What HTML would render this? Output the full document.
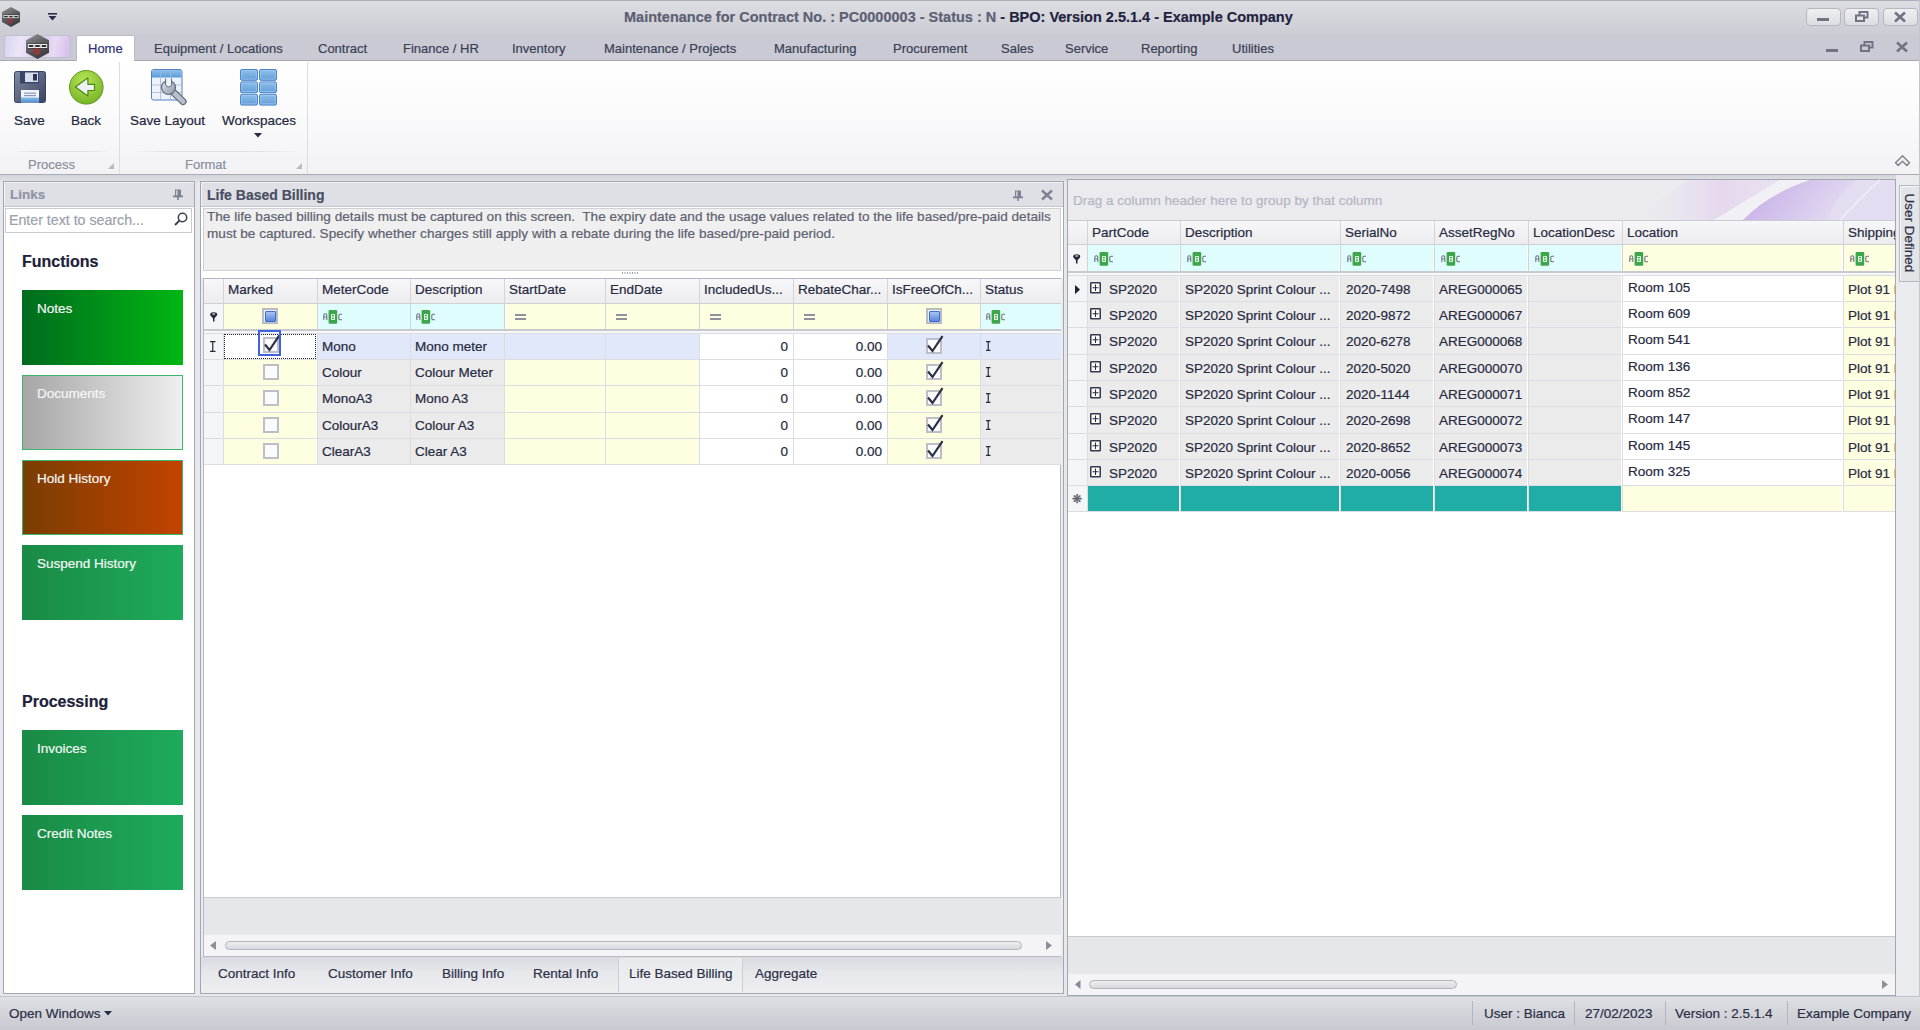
<!DOCTYPE html><html><head><meta charset="utf-8"><style>
*{box-sizing:border-box;margin:0;padding:0}
html,body{width:1920px;height:1030px;overflow:hidden;background:#e7e8eb;font-family:"Liberation Sans",sans-serif;font-size:13px;color:#20243a}
.a{position:absolute}
.t{position:absolute;white-space:nowrap;line-height:16px;-webkit-text-stroke:0.2px currentColor}
svg{position:absolute;overflow:visible}
</style></head><body>
<div class="a" style="left:0px;top:0px;width:1920px;height:35px;background:linear-gradient(#dcdde2,#d3d4da 55%,#cbccd4);border-top:1px solid #aeb1bb"></div>
<svg style="left:2px;top:7px" width="18" height="20" viewBox="0 0 18 20"><defs><linearGradient id="hg2_7" x1="0.2" y1="0" x2="0.7" y2="1"><stop offset="0" stop-color="#8e8e92"/><stop offset="0.5" stop-color="#5a5a5e"/><stop offset="1" stop-color="#3a3a3d"/></linearGradient></defs><polygon points="9.0,0 18,5.0 18,15.0 9.0,20 0,15.0 0,5.0" fill="url(#hg2_7)"/><rect x="1.08" y="7.6" width="15.84" height="4.0" fill="#2e2e30"/><rect x="1.8" y="8.4" width="4.32" height="2.4" fill="none" stroke="#f0f0f0" stroke-width="0.8099999999999999"/><rect x="6.84" y="8.4" width="4.32" height="2.4" fill="none" stroke="#f0f0f0" stroke-width="0.8099999999999999"/><rect x="11.88" y="8.4" width="4.32" height="2.4" fill="none" stroke="#f0f0f0" stroke-width="0.8099999999999999"/><circle cx="8.280000000000001" cy="14.0" r="1.8" fill="none" stroke="#c42828" stroke-width="1.08"/></svg>
<svg style="left:48px;top:13px" width="10" height="8" viewBox="0 0 10 8"><rect x="0" y="0" width="9" height="1.6" fill="#2a2c4a"/><polygon points="0.5,3 8.5,3 4.5,7.5" fill="#2a2c4a"/></svg>
<div class="t" style="left:624px;top:9px;font-size:14.5px;font-weight:bold;color:#5b6073;letter-spacing:0px">Maintenance for Contract No. : PC0000003 - Status : N <span style="color:#1f2340">- BPO: Version 2.5.1.4 - Example Company</span></div>
<div class="a" style="left:1806px;top:8px;width:35px;height:18px;border:1px solid #b4b6c0;border-radius:4px;background:linear-gradient(#f0f0f3,#dcdde2)"></div>
<div class="a" style="left:1844px;top:8px;width:35px;height:18px;border:1px solid #b4b6c0;border-radius:4px;background:linear-gradient(#f0f0f3,#dcdde2)"></div>
<div class="a" style="left:1883px;top:8px;width:35px;height:18px;border:1px solid #b4b6c0;border-radius:4px;background:linear-gradient(#f0f0f3,#dcdde2)"></div>
<div class="a" style="left:1817px;top:18px;width:12px;height:3px;background:#6f7384"></div>
<svg style="left:1855px;top:11px" width="14" height="11" viewBox="0 0 14 11"><rect x="4.5" y="1" width="8" height="5.5" fill="none" stroke="#6f7384" stroke-width="2"/><rect x="1" y="4.5" width="8" height="5.5" fill="#e4e5e9" stroke="#6f7384" stroke-width="2"/></svg>
<svg style="left:1894px;top:12px" width="12" height="10" viewBox="0 0 12 10"><path d="M1 0.5 L11 9.5 M11 0.5 L1 9.5" stroke="#6f7384" stroke-width="2.6"/></svg>
<div class="a" style="left:0px;top:35px;width:1920px;height:26px;background:#c9cad3;border-bottom:1px solid #a6a9b4"></div>
<div class="a" style="left:4px;top:35px;width:67px;height:23px;border:1px solid #bfc0cc;border-radius:2px;background:linear-gradient(100deg,#d9d3f2 0%,#ece6f8 25%,#dcc6ec 55%,#e7daf3 75%,#d4bde9 100%)"></div>
<svg style="left:26px;top:34px" width="23" height="25" viewBox="0 0 23 25"><defs><linearGradient id="hg26_34" x1="0.2" y1="0" x2="0.7" y2="1"><stop offset="0" stop-color="#8e8e92"/><stop offset="0.5" stop-color="#5a5a5e"/><stop offset="1" stop-color="#3a3a3d"/></linearGradient></defs><polygon points="11.5,0 23,6.25 23,18.75 11.5,25 0,18.75 0,6.25" fill="url(#hg26_34)"/><rect x="1.38" y="9.5" width="20.24" height="5.0" fill="#2e2e30"/><rect x="2.3000000000000003" y="10.5" width="5.52" height="3.0" fill="none" stroke="#f0f0f0" stroke-width="1.035"/><rect x="8.74" y="10.5" width="5.52" height="3.0" fill="none" stroke="#f0f0f0" stroke-width="1.035"/><rect x="15.180000000000001" y="10.5" width="5.52" height="3.0" fill="none" stroke="#f0f0f0" stroke-width="1.035"/><circle cx="10.58" cy="17.5" r="2.3000000000000003" fill="none" stroke="#c42828" stroke-width="1.38"/></svg>
<div class="a" style="left:76px;top:35px;width:59px;height:27px;background:#ffffff;border:1px solid #b9bbc5;border-bottom:none;border-radius:2px 2px 0 0"></div>
<div class="t" style="left:88px;top:41px;font-size:13px;color:#2b2f7a">Home</div>
<div class="t" style="left:154px;top:41px;font-size:13px;color:#3a3f55">Equipment / Locations</div>
<div class="t" style="left:318px;top:41px;font-size:13px;color:#3a3f55">Contract</div>
<div class="t" style="left:403px;top:41px;font-size:13px;color:#3a3f55">Finance / HR</div>
<div class="t" style="left:512px;top:41px;font-size:13px;color:#3a3f55">Inventory</div>
<div class="t" style="left:604px;top:41px;font-size:13px;color:#3a3f55">Maintenance / Projects</div>
<div class="t" style="left:774px;top:41px;font-size:13px;color:#3a3f55">Manufacturing</div>
<div class="t" style="left:893px;top:41px;font-size:13px;color:#3a3f55">Procurement</div>
<div class="t" style="left:1001px;top:41px;font-size:13px;color:#3a3f55">Sales</div>
<div class="t" style="left:1065px;top:41px;font-size:13px;color:#3a3f55">Service</div>
<div class="t" style="left:1141px;top:41px;font-size:13px;color:#3a3f55">Reporting</div>
<div class="t" style="left:1232px;top:41px;font-size:13px;color:#3a3f55">Utilities</div>
<div class="a" style="left:1826px;top:49px;width:12px;height:3px;background:#6f7384"></div>
<svg style="left:1860px;top:41px" width="14" height="11" viewBox="0 0 14 11"><rect x="4.5" y="1" width="8" height="5.5" fill="none" stroke="#6f7384" stroke-width="2"/><rect x="1" y="4.5" width="8" height="5.5" fill="#c9cad3" stroke="#6f7384" stroke-width="2"/></svg>
<svg style="left:1896px;top:42px" width="12" height="10" viewBox="0 0 12 10"><path d="M1 0.5 L11 9.5 M11 0.5 L1 9.5" stroke="#6f7384" stroke-width="2.6"/></svg>
<div class="a" style="left:0px;top:61px;width:1920px;height:114px;background:linear-gradient(#ffffff,#fbfbfc 45%,#f2f2f5);border-bottom:1px solid #a9acb6"></div>
<div class="a" style="left:119px;top:62px;width:1px;height:112px;background:#dcdde3"></div>
<div class="a" style="left:307px;top:62px;width:1px;height:112px;background:#dcdde3"></div>
<div class="a" style="left:12px;top:151px;width:100px;height:1px;background:linear-gradient(90deg,rgba(220,221,228,0),#e2e3e8 20%,#e2e3e8 80%,rgba(220,221,228,0))"></div>
<div class="a" style="left:128px;top:151px;width:172px;height:1px;background:linear-gradient(90deg,rgba(220,221,228,0),#e2e3e8 20%,#e2e3e8 80%,rgba(220,221,228,0))"></div>
<svg style="left:14px;top:71px" width="32" height="32" viewBox="0 0 32 32"><defs><linearGradient id="sv" x1="0" y1="0" x2="1" y2="1"><stop offset="0" stop-color="#828ca3"/><stop offset="1" stop-color="#38415f"/></linearGradient>
<linearGradient id="svb" x1="0" y1="0" x2="0" y2="1"><stop offset="0" stop-color="#86bde8"/><stop offset="1" stop-color="#4f8fd0"/></linearGradient></defs>
<rect x="0.5" y="0.5" width="31" height="31" rx="2" fill="url(#sv)" stroke="#38446a"/>
<rect x="6" y="0.5" width="19" height="12" fill="#3a4468"/>
<rect x="11" y="1.5" width="13" height="9.5" fill="#d5deea"/>
<rect x="19" y="3" width="4" height="6.5" fill="#2c3558"/>
<rect x="7" y="19" width="18" height="12.5" fill="#f2f4f9"/>
<rect x="7" y="26.5" width="18" height="5" fill="url(#svb)"/>
<rect x="10" y="21.5" width="12" height="1.4" fill="#98a2c8"/><rect x="10" y="24" width="12" height="1.2" fill="#8a95c0"/></svg>
<svg style="left:69px;top:70px" width="35" height="35" viewBox="0 0 35 35"><defs><radialGradient id="bk" cx="0.45" cy="0.3" r="0.8"><stop offset="0" stop-color="#b9e457"/><stop offset="1" stop-color="#6fae1e"/></radialGradient></defs>
<circle cx="17.3" cy="17.3" r="16.8" fill="url(#bk)" stroke="#5b9a1a" stroke-width="1"/>
<polygon points="6.4,17 18.9,7.8 18.9,14.3 25.5,14.3 25.5,20.5 18.9,20.5 18.9,26" fill="#eef2f4" stroke="#4a8a14" stroke-width="1.2" stroke-linejoin="round"/></svg>
<svg style="left:151px;top:69px" width="36" height="36" viewBox="0 0 36 36"><defs><linearGradient id="tb" x1="0" y1="0" x2="0" y2="1"><stop offset="0" stop-color="#8ec0ea"/><stop offset="1" stop-color="#5a9ad8"/></linearGradient>
<linearGradient id="wr" x1="0" y1="0" x2="1" y2="1"><stop offset="0" stop-color="#e4e8ee"/><stop offset="1" stop-color="#8d97a6"/></linearGradient></defs>
<rect x="0.5" y="0.5" width="30.5" height="30.5" rx="2" fill="#eef3fb" stroke="#5b7fc0"/>
<rect x="1" y="1" width="29.5" height="7.5" fill="url(#tb)"/>
<path d="M9.5 1 V31 M19.5 1 V31 M1 16 H31 M1 23.5 H31" stroke="#9fb6dc" stroke-width="0.8"/>
<line x1="18" y1="19" x2="32" y2="32.5" stroke="#5e6878" stroke-width="7.2" stroke-linecap="round"/>
<line x1="18" y1="19" x2="32" y2="32.5" stroke="#b7bfca" stroke-width="4.8" stroke-linecap="round"/>
<circle cx="17.5" cy="18.5" r="7.6" fill="#5e6878"/><circle cx="17.5" cy="18.5" r="6.4" fill="url(#wr)"/>
<path d="M14.6 9.5 V16.2 Q17.6 19.6 20.6 16.2 V9.5" fill="#eef3fb" stroke="#5e6878" stroke-width="1"/></svg>
<svg style="left:240px;top:69px" width="37" height="37" viewBox="0 0 37 37"><defs><linearGradient id="wsg" x1="0" y1="0" x2="0" y2="1"><stop offset="0" stop-color="#8fc0ea"/><stop offset="1" stop-color="#629cd8"/></linearGradient></defs><rect x="0.5" y="0.5" width="17" height="10.8" rx="1.5" fill="url(#wsg)" stroke="#4a84cb" stroke-width="1"/><rect x="1.7" y="1.7" width="14.6" height="8.4" rx="1" fill="none" stroke="#a9d0f2" stroke-width="0.8" opacity="0.8"/><rect x="19.5" y="0.5" width="17" height="10.8" rx="1.5" fill="url(#wsg)" stroke="#4a84cb" stroke-width="1"/><rect x="20.7" y="1.7" width="14.6" height="8.4" rx="1" fill="none" stroke="#a9d0f2" stroke-width="0.8" opacity="0.8"/><rect x="0.5" y="12.9" width="17" height="10.8" rx="1.5" fill="url(#wsg)" stroke="#4a84cb" stroke-width="1"/><rect x="1.7" y="14.1" width="14.6" height="8.4" rx="1" fill="none" stroke="#a9d0f2" stroke-width="0.8" opacity="0.8"/><rect x="19.5" y="12.9" width="17" height="10.8" rx="1.5" fill="url(#wsg)" stroke="#4a84cb" stroke-width="1"/><rect x="20.7" y="14.1" width="14.6" height="8.4" rx="1" fill="none" stroke="#a9d0f2" stroke-width="0.8" opacity="0.8"/><rect x="0.5" y="25.3" width="17" height="10.8" rx="1.5" fill="url(#wsg)" stroke="#4a84cb" stroke-width="1"/><rect x="1.7" y="26.5" width="14.6" height="8.4" rx="1" fill="none" stroke="#a9d0f2" stroke-width="0.8" opacity="0.8"/><rect x="19.5" y="25.3" width="17" height="10.8" rx="1.5" fill="url(#wsg)" stroke="#4a84cb" stroke-width="1"/><rect x="20.7" y="26.5" width="14.6" height="8.4" rx="1" fill="none" stroke="#a9d0f2" stroke-width="0.8" opacity="0.8"/></svg>
<div class="t" style="left:14px;top:113px;font-size:13.5px;color:#23273b">Save</div>
<div class="t" style="left:71px;top:113px;font-size:13.5px;color:#23273b">Back</div>
<div class="t" style="left:130px;top:113px;font-size:13.5px;color:#23273b">Save Layout</div>
<div class="t" style="left:222px;top:113px;font-size:13.5px;color:#23273b">Workspaces</div>
<svg style="left:254px;top:133px" width="9" height="5" viewBox="0 0 9 5"><polygon points="0,0 8,0 4,4.5" fill="#2a2c40"/></svg>
<div class="t" style="left:28px;top:156.5px;font-size:13px;color:#8b8f9f">Process</div>
<div class="t" style="left:185px;top:156.5px;font-size:13px;color:#8b8f9f">Format</div>
<svg style="left:108px;top:163px" width="6" height="6" viewBox="0 0 6 6"><polygon points="6,0 6,6 0,6" fill="#b7bac4"/></svg>
<svg style="left:296px;top:163px" width="6" height="6" viewBox="0 0 6 6"><polygon points="6,0 6,6 0,6" fill="#b7bac4"/></svg>
<svg style="left:1894px;top:154px" width="17" height="13" viewBox="0 0 17 13"><polygon points="1.5,8.8 8.5,1.8 15.5,8.8 12.8,11.5 8.5,7.2 4.2,11.5" fill="#eef0f4" stroke="#7a7e8b" stroke-width="1.3" stroke-linejoin="round"/></svg>
<div class="a" style="left:0px;top:175px;width:1920px;height:8px;background:linear-gradient(#d3d4d9,#e4e5e9)"></div>
<div class="a" style="left:3px;top:181px;width:192px;height:813px;background:#ffffff;border:1px solid #a3a6b0"></div>
<div class="a" style="left:4px;top:182px;width:190px;height:25px;background:#dfe0e5;border-bottom:1px solid #c3c5cd;box-shadow:inset 1px 1px 0 #f3f3f5"></div>
<div class="t" style="left:10px;top:187px;font-size:13.5px;font-weight:bold;color:#9094a4">Links</div>
<svg style="left:173px;top:189px" width="10" height="11" viewBox="0 0 10 11"><rect x="2" y="0.5" width="6" height="6.5" fill="#7d8191"/><rect x="3.2" y="1.5" width="1.3" height="5" fill="#e0e1e6"/><rect x="0" y="6.5" width="10" height="1.8" fill="#7d8191"/><rect x="4.2" y="8" width="1.6" height="3" fill="#7d8191"/></svg>
<div class="a" style="left:5px;top:208px;width:187px;height:25px;background:#fff;border:1px solid #c9cbd3"></div>
<div class="t" style="left:9px;top:212px;font-size:14.2px;color:#9b9fae">Enter text to search...</div>
<svg style="left:174px;top:212px" width="14" height="14" viewBox="0 0 14 14"><circle cx="8.5" cy="5.5" r="4.2" fill="none" stroke="#3a3e52" stroke-width="1.5"/><path d="M5.5 8.5 L1 13" stroke="#3a3e52" stroke-width="1.8"/></svg>
<div class="t" style="left:22px;top:253.5px;font-size:16px;font-weight:bold;color:#1d2138">Functions</div>
<div class="t" style="left:22px;top:693.5px;font-size:16px;font-weight:bold;color:#1d2138">Processing</div>
<div class="a" style="left:22px;top:290px;width:161px;height:75px;background:linear-gradient(90deg,#006b1e,#00b712);border:none"></div>
<div class="t" style="left:37px;top:301px;font-size:13.5px;color:#f4f7f4">Notes</div>
<div class="a" style="left:22px;top:375px;width:161px;height:75px;background:linear-gradient(90deg,#a6a6a6,#efefef);border:1px solid #3cb66a"></div>
<div class="t" style="left:37px;top:386px;font-size:13.5px;color:#f4f7f4">Documents</div>
<div class="a" style="left:22px;top:460px;width:161px;height:75px;background:linear-gradient(90deg,#7a3d02,#c34300);border:1px solid #3cb66a"></div>
<div class="t" style="left:37px;top:471px;font-size:13.5px;color:#f4f7f4">Hold History</div>
<div class="a" style="left:22px;top:545px;width:161px;height:75px;background:linear-gradient(90deg,#1a8a45,#1eab5c);border:none"></div>
<div class="t" style="left:37px;top:556px;font-size:13.5px;color:#f4f7f4">Suspend History</div>
<div class="a" style="left:22px;top:730px;width:161px;height:75px;background:linear-gradient(90deg,#1a8a45,#1eab5c);border:none"></div>
<div class="t" style="left:37px;top:741px;font-size:13.5px;color:#f4f7f4">Invoices</div>
<div class="a" style="left:22px;top:815px;width:161px;height:75px;background:linear-gradient(90deg,#1a8a45,#1eab5c);border:none"></div>
<div class="t" style="left:37px;top:826px;font-size:13.5px;color:#f4f7f4">Credit Notes</div>
<div class="a" style="left:200px;top:181px;width:864px;height:813px;background:#ebecef;border:1px solid #a3a6b0"></div>
<div class="a" style="left:201px;top:182px;width:862px;height:25px;background:#dfe0e5;border-bottom:1px solid #c3c5cd;box-shadow:inset 1px 1px 0 #f3f3f5"></div>
<div class="t" style="left:207px;top:187px;font-size:14px;font-weight:bold;color:#4a4f63">Life Based Billing</div>
<svg style="left:1013px;top:190px" width="10" height="11" viewBox="0 0 10 11"><rect x="2" y="0.5" width="6" height="6.5" fill="#7d8191"/><rect x="3.2" y="1.5" width="1.3" height="5" fill="#e0e1e6"/><rect x="0" y="6.5" width="10" height="1.8" fill="#7d8191"/><rect x="4.2" y="8" width="1.6" height="3" fill="#7d8191"/></svg>
<svg style="left:1041px;top:190px" width="12" height="10" viewBox="0 0 12 10"><path d="M1 0.5 L11 9.5 M11 0.5 L1 9.5" stroke="#7d8191" stroke-width="2.4"/></svg>
<div class="a" style="left:201px;top:207px;width:862px;height:71px;background:#ffffff"></div>
<div class="a" style="left:203px;top:208px;width:858px;height:63px;background:#efefef;border:1px solid #cfd0d5"></div>
<div class="t" style="left:207px;top:209px;font-size:13.6px;color:#5d6170;line-height:16.5px">The life based billing details must be captured on this screen.&nbsp; The expiry date and the usage values related to the life based/pre-paid details<br>must be captured. Specify whether charges still apply with a rebate during the life based/pre-paid period.</div>
<svg style="left:622px;top:272px" width="18" height="3" viewBox="0 0 18 3"><rect x="0.0" y="0" width="1" height="2" fill="#9ea1ab"/><rect x="2.5" y="0" width="1" height="2" fill="#9ea1ab"/><rect x="5.0" y="0" width="1" height="2" fill="#9ea1ab"/><rect x="7.5" y="0" width="1" height="2" fill="#9ea1ab"/><rect x="10.0" y="0" width="1" height="2" fill="#9ea1ab"/><rect x="12.5" y="0" width="1" height="2" fill="#9ea1ab"/><rect x="15.0" y="0" width="1" height="2" fill="#9ea1ab"/></svg>
<div class="a" style="left:203px;top:278px;width:858px;height:680px;background:#ffffff;border:1px solid #b5b8c0"></div>
<div class="a" style="left:204px;top:279px;width:857px;height:25px;background:linear-gradient(#f7f7f9,#ececef);border-bottom:1px solid #cfd0d6"></div>
<div class="a" style="left:223px;top:279px;width:1px;height:24px;background:#d3d4da"></div>
<div class="t" style="left:228px;top:282px;font-size:13.5px;color:#262a40">Marked</div>
<div class="a" style="left:317px;top:279px;width:1px;height:24px;background:#d3d4da"></div>
<div class="t" style="left:322px;top:282px;font-size:13.5px;color:#262a40">MeterCode</div>
<div class="a" style="left:410px;top:279px;width:1px;height:24px;background:#d3d4da"></div>
<div class="t" style="left:415px;top:282px;font-size:13.5px;color:#262a40">Description</div>
<div class="a" style="left:504px;top:279px;width:1px;height:24px;background:#d3d4da"></div>
<div class="t" style="left:509px;top:282px;font-size:13.5px;color:#262a40">StartDate</div>
<div class="a" style="left:605px;top:279px;width:1px;height:24px;background:#d3d4da"></div>
<div class="t" style="left:610px;top:282px;font-size:13.5px;color:#262a40">EndDate</div>
<div class="a" style="left:699px;top:279px;width:1px;height:24px;background:#d3d4da"></div>
<div class="t" style="left:704px;top:282px;font-size:13.5px;color:#262a40">IncludedUs...</div>
<div class="a" style="left:793px;top:279px;width:1px;height:24px;background:#d3d4da"></div>
<div class="t" style="left:798px;top:282px;font-size:13.5px;color:#262a40">RebateChar...</div>
<div class="a" style="left:887px;top:279px;width:1px;height:24px;background:#d3d4da"></div>
<div class="t" style="left:892px;top:282px;font-size:13.5px;color:#262a40">IsFreeOfCh...</div>
<div class="a" style="left:980px;top:279px;width:1px;height:24px;background:#d3d4da"></div>
<div class="t" style="left:985px;top:282px;font-size:13.5px;color:#262a40">Status</div>
<div class="a" style="left:204px;top:304px;width:19px;height:25px;background:#f4f5f7"></div>
<div class="a" style="left:223px;top:304px;width:94px;height:25px;background:#fefee0;border-left:1px solid #d3d4da"></div>
<div class="a" style="left:317px;top:304px;width:93px;height:25px;background:#e0fdfd;border-left:1px solid #d3d4da"></div>
<div class="a" style="left:410px;top:304px;width:94px;height:25px;background:#e0fdfd;border-left:1px solid #d3d4da"></div>
<div class="a" style="left:504px;top:304px;width:101px;height:25px;background:#fefee0;border-left:1px solid #d3d4da"></div>
<div class="a" style="left:605px;top:304px;width:94px;height:25px;background:#fefee0;border-left:1px solid #d3d4da"></div>
<div class="a" style="left:699px;top:304px;width:94px;height:25px;background:#fefee0;border-left:1px solid #d3d4da"></div>
<div class="a" style="left:793px;top:304px;width:94px;height:25px;background:#fefee0;border-left:1px solid #d3d4da"></div>
<div class="a" style="left:887px;top:304px;width:93px;height:25px;background:#fefee0;border-left:1px solid #d3d4da"></div>
<div class="a" style="left:980px;top:304px;width:81px;height:25px;background:#e0fdfd;border-left:1px solid #d3d4da"></div>
<svg style="left:210px;top:312px" width="8" height="10" viewBox="0 0 8 10"><ellipse cx="3.7" cy="2.4" rx="3.5" ry="2.2" fill="#23263a"/><ellipse cx="3.7" cy="2" rx="1.6" ry="0.8" fill="#dde"/><polygon points="1.2,4 6.2,4 4.5,6.5 4.5,9.5 3,9.5 3,6.5" fill="#23263a"/></svg>
<div class="a" style="left:262px;top:308px;width:16px;height:16px;background:#eef0f4;border:2px solid #b9bcc5"></div>
<div class="a" style="left:265px;top:311px;width:10.5px;height:10.5px;background:linear-gradient(#a8c4f2,#5a86dc);border:1px solid #3e6ed0;border-radius:1px"></div>
<div class="a" style="left:926px;top:308px;width:16px;height:16px;background:#eef0f4;border:2px solid #b9bcc5"></div>
<div class="a" style="left:929px;top:311px;width:10.5px;height:10.5px;background:linear-gradient(#a8c4f2,#5a86dc);border:1px solid #3e6ed0;border-radius:1px"></div>
<svg style="left:323px;top:310px" width="20" height="14" viewBox="0 0 20 14"><path d="M0.8 10 V5.2 Q0.8 3.8 2.3 3.8 Q3.8 3.8 3.8 5.2 V10 M0.8 7 H3.8" fill="none" stroke="#6e7282" stroke-width="1.1"/><rect x="5.6" y="0" width="8.6" height="13.7" rx="1.2" fill="#3ea64a"/><rect x="8" y="3.9" width="4" height="6" rx="0.6" fill="#e4f4e4"/><rect x="9" y="4.9" width="1.8" height="1.4" fill="#3ea64a"/><rect x="9" y="7.5" width="1.8" height="1.4" fill="#3ea64a"/><path d="M19 4.3 H17 Q15.8 4.3 15.8 5.5 V8.5 Q15.8 9.8 17 9.8 H19" fill="none" stroke="#6e7282" stroke-width="1.1"/></svg>
<svg style="left:416px;top:310px" width="20" height="14" viewBox="0 0 20 14"><path d="M0.8 10 V5.2 Q0.8 3.8 2.3 3.8 Q3.8 3.8 3.8 5.2 V10 M0.8 7 H3.8" fill="none" stroke="#6e7282" stroke-width="1.1"/><rect x="5.6" y="0" width="8.6" height="13.7" rx="1.2" fill="#3ea64a"/><rect x="8" y="3.9" width="4" height="6" rx="0.6" fill="#e4f4e4"/><rect x="9" y="4.9" width="1.8" height="1.4" fill="#3ea64a"/><rect x="9" y="7.5" width="1.8" height="1.4" fill="#3ea64a"/><path d="M19 4.3 H17 Q15.8 4.3 15.8 5.5 V8.5 Q15.8 9.8 17 9.8 H19" fill="none" stroke="#6e7282" stroke-width="1.1"/></svg>
<svg style="left:986px;top:310px" width="20" height="14" viewBox="0 0 20 14"><path d="M0.8 10 V5.2 Q0.8 3.8 2.3 3.8 Q3.8 3.8 3.8 5.2 V10 M0.8 7 H3.8" fill="none" stroke="#6e7282" stroke-width="1.1"/><rect x="5.6" y="0" width="8.6" height="13.7" rx="1.2" fill="#3ea64a"/><rect x="8" y="3.9" width="4" height="6" rx="0.6" fill="#e4f4e4"/><rect x="9" y="4.9" width="1.8" height="1.4" fill="#3ea64a"/><rect x="9" y="7.5" width="1.8" height="1.4" fill="#3ea64a"/><path d="M19 4.3 H17 Q15.8 4.3 15.8 5.5 V8.5 Q15.8 9.8 17 9.8 H19" fill="none" stroke="#6e7282" stroke-width="1.1"/></svg>
<div class="a" style="left:515px;top:314px;width:11px;height:1.5px;background:#8e92a0"></div>
<div class="a" style="left:515px;top:318px;width:11px;height:1.5px;background:#8e92a0"></div>
<div class="a" style="left:616px;top:314px;width:11px;height:1.5px;background:#8e92a0"></div>
<div class="a" style="left:616px;top:318px;width:11px;height:1.5px;background:#8e92a0"></div>
<div class="a" style="left:710px;top:314px;width:11px;height:1.5px;background:#8e92a0"></div>
<div class="a" style="left:710px;top:318px;width:11px;height:1.5px;background:#8e92a0"></div>
<div class="a" style="left:804px;top:314px;width:11px;height:1.5px;background:#8e92a0"></div>
<div class="a" style="left:804px;top:318px;width:11px;height:1.5px;background:#8e92a0"></div>
<div class="a" style="left:204px;top:329px;width:857px;height:2px;background:#c8cad0"></div>
<div class="a" style="left:204px;top:331px;width:857px;height:2px;background:#f7f7f9"></div>
<div class="a" style="left:204px;top:333px;width:857px;height:1px;background:#dcdde2"></div>
<div class="a" style="left:204px;top:334px;width:19px;height:26px;background:#f4f5f7;border-bottom:1px solid #dcdde2"></div>
<div class="a" style="left:223px;top:334px;width:94px;height:26px;background:#ffffff;border-left:1px solid #dcdde2;border-bottom:1px solid #dcdde2"></div>
<div class="a" style="left:317px;top:334px;width:93px;height:26px;background:#e1e8f9;border-left:1px solid #dcdde2;border-bottom:1px solid #dcdde2"></div>
<div class="a" style="left:410px;top:334px;width:94px;height:26px;background:#e1e8f9;border-left:1px solid #dcdde2;border-bottom:1px solid #dcdde2"></div>
<div class="a" style="left:504px;top:334px;width:101px;height:26px;background:#e1e8f9;border-left:1px solid #dcdde2;border-bottom:1px solid #dcdde2"></div>
<div class="a" style="left:605px;top:334px;width:94px;height:26px;background:#e1e8f9;border-left:1px solid #dcdde2;border-bottom:1px solid #dcdde2"></div>
<div class="a" style="left:699px;top:334px;width:94px;height:26px;background:#ffffff;border-left:1px solid #dcdde2;border-bottom:1px solid #dcdde2"></div>
<div class="a" style="left:793px;top:334px;width:94px;height:26px;background:#ffffff;border-left:1px solid #dcdde2;border-bottom:1px solid #dcdde2"></div>
<div class="a" style="left:887px;top:334px;width:93px;height:26px;background:#e1e8f9;border-left:1px solid #dcdde2;border-bottom:1px solid #dcdde2"></div>
<div class="a" style="left:980px;top:334px;width:81px;height:26px;background:#e1e8f9;border-left:1px solid #dcdde2;border-bottom:1px solid #dcdde2"></div>
<div class="t" style="left:322px;top:339px;font-size:13.5px;color:#262a40">Mono</div>
<div class="t" style="left:415px;top:339px;font-size:13.5px;color:#262a40">Mono meter</div>
<div class="t" style="left:488px;width:300px;text-align:right;top:339px;font-size:13.5px;color:#262a40">0</div>
<div class="t" style="left:582px;width:300px;text-align:right;top:339px;font-size:13.5px;color:#262a40">0.00</div>
<svg style="left:986px;top:341px" width="5" height="10" viewBox="0 0 5 10"><path d="M0 0.6 H4.5 M0 9.4 H4.5 M2.25 0.6 V9.4" stroke="#262a40" stroke-width="1.2"/></svg>
<div class="a" style="left:263px;top:337px;width:16px;height:16px;background:#fbfbfd;border:2px solid #bcbfc7"></div>
<svg style="left:263px;top:334px" width="18" height="18" viewBox="0 0 18 18"><path d="M2 10.5 L6.5 16 L16.5 1.2" fill="none" stroke="#2c3045" stroke-width="2.2" stroke-linejoin="miter"/></svg>
<div class="a" style="left:926px;top:338px;width:16px;height:16px;background:#fbfbfd;border:2px solid #bcbfc7"></div>
<svg style="left:926px;top:335px" width="18" height="18" viewBox="0 0 18 18"><path d="M2 10.5 L6.5 16 L16.5 1.2" fill="none" stroke="#2c3045" stroke-width="2.2" stroke-linejoin="miter"/></svg>
<div class="a" style="left:204px;top:360px;width:19px;height:26px;background:#f4f5f7;border-bottom:1px solid #dcdde2"></div>
<div class="a" style="left:223px;top:360px;width:94px;height:26px;background:#fefee0;border-left:1px solid #dcdde2;border-bottom:1px solid #dcdde2"></div>
<div class="a" style="left:317px;top:360px;width:93px;height:26px;background:#ebebec;border-left:1px solid #dcdde2;border-bottom:1px solid #dcdde2"></div>
<div class="a" style="left:410px;top:360px;width:94px;height:26px;background:#ebebec;border-left:1px solid #dcdde2;border-bottom:1px solid #dcdde2"></div>
<div class="a" style="left:504px;top:360px;width:101px;height:26px;background:#fefee0;border-left:1px solid #dcdde2;border-bottom:1px solid #dcdde2"></div>
<div class="a" style="left:605px;top:360px;width:94px;height:26px;background:#fefee0;border-left:1px solid #dcdde2;border-bottom:1px solid #dcdde2"></div>
<div class="a" style="left:699px;top:360px;width:94px;height:26px;background:#ffffff;border-left:1px solid #dcdde2;border-bottom:1px solid #dcdde2"></div>
<div class="a" style="left:793px;top:360px;width:94px;height:26px;background:#ffffff;border-left:1px solid #dcdde2;border-bottom:1px solid #dcdde2"></div>
<div class="a" style="left:887px;top:360px;width:93px;height:26px;background:#fefee0;border-left:1px solid #dcdde2;border-bottom:1px solid #dcdde2"></div>
<div class="a" style="left:980px;top:360px;width:81px;height:26px;background:#ebebec;border-left:1px solid #dcdde2;border-bottom:1px solid #dcdde2"></div>
<div class="t" style="left:322px;top:365px;font-size:13.5px;color:#262a40">Colour</div>
<div class="t" style="left:415px;top:365px;font-size:13.5px;color:#262a40">Colour Meter</div>
<div class="t" style="left:488px;width:300px;text-align:right;top:365px;font-size:13.5px;color:#262a40">0</div>
<div class="t" style="left:582px;width:300px;text-align:right;top:365px;font-size:13.5px;color:#262a40">0.00</div>
<svg style="left:986px;top:367px" width="5" height="10" viewBox="0 0 5 10"><path d="M0 0.6 H4.5 M0 9.4 H4.5 M2.25 0.6 V9.4" stroke="#262a40" stroke-width="1.2"/></svg>
<div class="a" style="left:263px;top:364px;width:16px;height:16px;background:#fbfbfd;border:2px solid #bcbfc7"></div>
<div class="a" style="left:926px;top:364px;width:16px;height:16px;background:#fbfbfd;border:2px solid #bcbfc7"></div>
<svg style="left:926px;top:361px" width="18" height="18" viewBox="0 0 18 18"><path d="M2 10.5 L6.5 16 L16.5 1.2" fill="none" stroke="#2c3045" stroke-width="2.2" stroke-linejoin="miter"/></svg>
<div class="a" style="left:204px;top:386px;width:19px;height:27px;background:#f4f5f7;border-bottom:1px solid #dcdde2"></div>
<div class="a" style="left:223px;top:386px;width:94px;height:27px;background:#fefee0;border-left:1px solid #dcdde2;border-bottom:1px solid #dcdde2"></div>
<div class="a" style="left:317px;top:386px;width:93px;height:27px;background:#ebebec;border-left:1px solid #dcdde2;border-bottom:1px solid #dcdde2"></div>
<div class="a" style="left:410px;top:386px;width:94px;height:27px;background:#ebebec;border-left:1px solid #dcdde2;border-bottom:1px solid #dcdde2"></div>
<div class="a" style="left:504px;top:386px;width:101px;height:27px;background:#fefee0;border-left:1px solid #dcdde2;border-bottom:1px solid #dcdde2"></div>
<div class="a" style="left:605px;top:386px;width:94px;height:27px;background:#fefee0;border-left:1px solid #dcdde2;border-bottom:1px solid #dcdde2"></div>
<div class="a" style="left:699px;top:386px;width:94px;height:27px;background:#ffffff;border-left:1px solid #dcdde2;border-bottom:1px solid #dcdde2"></div>
<div class="a" style="left:793px;top:386px;width:94px;height:27px;background:#ffffff;border-left:1px solid #dcdde2;border-bottom:1px solid #dcdde2"></div>
<div class="a" style="left:887px;top:386px;width:93px;height:27px;background:#fefee0;border-left:1px solid #dcdde2;border-bottom:1px solid #dcdde2"></div>
<div class="a" style="left:980px;top:386px;width:81px;height:27px;background:#ebebec;border-left:1px solid #dcdde2;border-bottom:1px solid #dcdde2"></div>
<div class="t" style="left:322px;top:391px;font-size:13.5px;color:#262a40">MonoA3</div>
<div class="t" style="left:415px;top:391px;font-size:13.5px;color:#262a40">Mono A3</div>
<div class="t" style="left:488px;width:300px;text-align:right;top:391px;font-size:13.5px;color:#262a40">0</div>
<div class="t" style="left:582px;width:300px;text-align:right;top:391px;font-size:13.5px;color:#262a40">0.00</div>
<svg style="left:986px;top:393px" width="5" height="10" viewBox="0 0 5 10"><path d="M0 0.6 H4.5 M0 9.4 H4.5 M2.25 0.6 V9.4" stroke="#262a40" stroke-width="1.2"/></svg>
<div class="a" style="left:263px;top:390px;width:16px;height:16px;background:#fbfbfd;border:2px solid #bcbfc7"></div>
<div class="a" style="left:926px;top:390px;width:16px;height:16px;background:#fbfbfd;border:2px solid #bcbfc7"></div>
<svg style="left:926px;top:387px" width="18" height="18" viewBox="0 0 18 18"><path d="M2 10.5 L6.5 16 L16.5 1.2" fill="none" stroke="#2c3045" stroke-width="2.2" stroke-linejoin="miter"/></svg>
<div class="a" style="left:204px;top:413px;width:19px;height:26px;background:#f4f5f7;border-bottom:1px solid #dcdde2"></div>
<div class="a" style="left:223px;top:413px;width:94px;height:26px;background:#fefee0;border-left:1px solid #dcdde2;border-bottom:1px solid #dcdde2"></div>
<div class="a" style="left:317px;top:413px;width:93px;height:26px;background:#ebebec;border-left:1px solid #dcdde2;border-bottom:1px solid #dcdde2"></div>
<div class="a" style="left:410px;top:413px;width:94px;height:26px;background:#ebebec;border-left:1px solid #dcdde2;border-bottom:1px solid #dcdde2"></div>
<div class="a" style="left:504px;top:413px;width:101px;height:26px;background:#fefee0;border-left:1px solid #dcdde2;border-bottom:1px solid #dcdde2"></div>
<div class="a" style="left:605px;top:413px;width:94px;height:26px;background:#fefee0;border-left:1px solid #dcdde2;border-bottom:1px solid #dcdde2"></div>
<div class="a" style="left:699px;top:413px;width:94px;height:26px;background:#ffffff;border-left:1px solid #dcdde2;border-bottom:1px solid #dcdde2"></div>
<div class="a" style="left:793px;top:413px;width:94px;height:26px;background:#ffffff;border-left:1px solid #dcdde2;border-bottom:1px solid #dcdde2"></div>
<div class="a" style="left:887px;top:413px;width:93px;height:26px;background:#fefee0;border-left:1px solid #dcdde2;border-bottom:1px solid #dcdde2"></div>
<div class="a" style="left:980px;top:413px;width:81px;height:26px;background:#ebebec;border-left:1px solid #dcdde2;border-bottom:1px solid #dcdde2"></div>
<div class="t" style="left:322px;top:418px;font-size:13.5px;color:#262a40">ColourA3</div>
<div class="t" style="left:415px;top:418px;font-size:13.5px;color:#262a40">Colour A3</div>
<div class="t" style="left:488px;width:300px;text-align:right;top:418px;font-size:13.5px;color:#262a40">0</div>
<div class="t" style="left:582px;width:300px;text-align:right;top:418px;font-size:13.5px;color:#262a40">0.00</div>
<svg style="left:986px;top:420px" width="5" height="10" viewBox="0 0 5 10"><path d="M0 0.6 H4.5 M0 9.4 H4.5 M2.25 0.6 V9.4" stroke="#262a40" stroke-width="1.2"/></svg>
<div class="a" style="left:263px;top:417px;width:16px;height:16px;background:#fbfbfd;border:2px solid #bcbfc7"></div>
<div class="a" style="left:926px;top:417px;width:16px;height:16px;background:#fbfbfd;border:2px solid #bcbfc7"></div>
<svg style="left:926px;top:414px" width="18" height="18" viewBox="0 0 18 18"><path d="M2 10.5 L6.5 16 L16.5 1.2" fill="none" stroke="#2c3045" stroke-width="2.2" stroke-linejoin="miter"/></svg>
<div class="a" style="left:204px;top:439px;width:19px;height:26px;background:#f4f5f7;border-bottom:1px solid #dcdde2"></div>
<div class="a" style="left:223px;top:439px;width:94px;height:26px;background:#fefee0;border-left:1px solid #dcdde2;border-bottom:1px solid #dcdde2"></div>
<div class="a" style="left:317px;top:439px;width:93px;height:26px;background:#ebebec;border-left:1px solid #dcdde2;border-bottom:1px solid #dcdde2"></div>
<div class="a" style="left:410px;top:439px;width:94px;height:26px;background:#ebebec;border-left:1px solid #dcdde2;border-bottom:1px solid #dcdde2"></div>
<div class="a" style="left:504px;top:439px;width:101px;height:26px;background:#fefee0;border-left:1px solid #dcdde2;border-bottom:1px solid #dcdde2"></div>
<div class="a" style="left:605px;top:439px;width:94px;height:26px;background:#fefee0;border-left:1px solid #dcdde2;border-bottom:1px solid #dcdde2"></div>
<div class="a" style="left:699px;top:439px;width:94px;height:26px;background:#ffffff;border-left:1px solid #dcdde2;border-bottom:1px solid #dcdde2"></div>
<div class="a" style="left:793px;top:439px;width:94px;height:26px;background:#ffffff;border-left:1px solid #dcdde2;border-bottom:1px solid #dcdde2"></div>
<div class="a" style="left:887px;top:439px;width:93px;height:26px;background:#fefee0;border-left:1px solid #dcdde2;border-bottom:1px solid #dcdde2"></div>
<div class="a" style="left:980px;top:439px;width:81px;height:26px;background:#ebebec;border-left:1px solid #dcdde2;border-bottom:1px solid #dcdde2"></div>
<div class="t" style="left:322px;top:444px;font-size:13.5px;color:#262a40">ClearA3</div>
<div class="t" style="left:415px;top:444px;font-size:13.5px;color:#262a40">Clear A3</div>
<div class="t" style="left:488px;width:300px;text-align:right;top:444px;font-size:13.5px;color:#262a40">0</div>
<div class="t" style="left:582px;width:300px;text-align:right;top:444px;font-size:13.5px;color:#262a40">0.00</div>
<svg style="left:986px;top:446px" width="5" height="10" viewBox="0 0 5 10"><path d="M0 0.6 H4.5 M0 9.4 H4.5 M2.25 0.6 V9.4" stroke="#262a40" stroke-width="1.2"/></svg>
<div class="a" style="left:263px;top:443px;width:16px;height:16px;background:#fbfbfd;border:2px solid #bcbfc7"></div>
<div class="a" style="left:926px;top:443px;width:16px;height:16px;background:#fbfbfd;border:2px solid #bcbfc7"></div>
<svg style="left:926px;top:440px" width="18" height="18" viewBox="0 0 18 18"><path d="M2 10.5 L6.5 16 L16.5 1.2" fill="none" stroke="#2c3045" stroke-width="2.2" stroke-linejoin="miter"/></svg>
<div class="a" style="left:224px;top:334px;width:92px;height:25px;border:1px dotted #222"></div>
<div class="a" style="left:258px;top:330px;width:23px;height:26px;border:2.5px solid #3f63dc"></div>
<svg style="left:210px;top:341px" width="6" height="11" viewBox="0 0 6 11"><path d="M0 0.6 H5.5 M0 10.4 H5.5 M2.75 0.6 V10.4" stroke="#262a40" stroke-width="1.2"/></svg>
<div class="a" style="left:204px;top:897px;width:857px;height:38px;background:#e6e7ea;border-top:1px solid #c9cbd1"></div>
<div class="a" style="left:204px;top:935px;width:857px;height:22px;background:#f4f4f6;border-bottom:1px solid #b8bbc3"></div>
<svg style="left:210px;top:941px" width="7" height="9" viewBox="0 0 7 9"><polygon points="6,0 6,9 0,4.5" fill="#8c909c"/></svg>
<svg style="left:1046px;top:941px" width="7" height="9" viewBox="0 0 7 9"><polygon points="0,0 0,9 6,4.5" fill="#8c909c"/></svg>
<div class="a" style="left:225px;top:941px;width:797px;height:9px;background:linear-gradient(#eceef1,#d7d9de);border:1px solid #b1b4bc;border-radius:5px"></div>
<div class="a" style="left:201px;top:957px;width:862px;height:36px;background:linear-gradient(#d9dadf,#e6e7eb 40%,#eeeef1)"></div>
<div class="a" style="left:618px;top:958px;width:125px;height:34px;background:linear-gradient(#e9eaee,#eeeff2);border-left:1px solid #cdced4;border-right:1px solid #cdced4"></div>
<div class="t" style="left:218px;top:966px;font-size:13.5px;color:#2c3046">Contract Info</div>
<div class="t" style="left:328px;top:966px;font-size:13.5px;color:#2c3046">Customer Info</div>
<div class="t" style="left:442px;top:966px;font-size:13.5px;color:#2c3046">Billing Info</div>
<div class="t" style="left:533px;top:966px;font-size:13.5px;color:#2c3046">Rental Info</div>
<div class="t" style="left:629px;top:966px;font-size:13.5px;color:#2c3046">Life Based Billing</div>
<div class="t" style="left:755px;top:966px;font-size:13.5px;color:#2c3046">Aggregate</div>
<div class="a" style="left:1067px;top:179px;width:829px;height:817px;background:#ffffff;border:1px solid #a3a6b0"></div>
<div class="a" style="left:1068px;top:180px;width:827px;height:41px;background:#ebebef;border-bottom:1px solid #c9cbd2"></div>
<svg style="left:1068px;top:180px" width="827" height="40" viewBox="0 0 827 40"><defs><linearGradient id="hz" x1="0" y1="0" x2="1" y2="0"><stop offset="0" stop-color="#ebebef" stop-opacity="0"/><stop offset="0.6" stop-color="#e6d8ee"/><stop offset="1" stop-color="#e9e2f0"/></linearGradient><linearGradient id="pc" x1="0" y1="0" x2="1" y2="0.3"><stop offset="0" stop-color="#c3aae4"/><stop offset="0.5" stop-color="#d2c2ec"/><stop offset="1" stop-color="#e3daf1"/></linearGradient></defs><polygon points="560,40 646,40 712,0 620,0" fill="url(#hz)"/><polygon points="646,40 675,40 740,0 712,0" fill="#f1f0f4"/><path d="M675 40 Q 700 14 742 0 L 827 0 L 827 40 Z" fill="#e4dcf1"/><path d="M675 40 Q 700 14 742 0 L 790 0 Q 770 10 760 40 Z" fill="url(#pc)"/><path d="M812 0 Q 790 20 772 40" stroke="#efeaf6" stroke-width="2" fill="none"/></svg>
<div class="t" style="left:1073px;top:193px;font-size:13.5px;color:#b3b6c2">Drag a column header here to group by that column</div>
<div class="a" style="left:1068px;top:221px;width:827px;height:24px;background:linear-gradient(#f7f7f9,#ececef);border-bottom:1px solid #cfd0d6"></div>
<div class="a" style="left:1068px;top:221px;width:827px;height:290px;overflow:hidden">
<div class="a" style="left:19px;top:0px;width:1px;height:24px;background:#d3d4da"></div>
<div class="t" style="left:24px;top:4px;font-size:13.5px;color:#262a40">PartCode</div>
<div class="a" style="left:112px;top:0px;width:1px;height:24px;background:#d3d4da"></div>
<div class="t" style="left:117px;top:4px;font-size:13.5px;color:#262a40">Description</div>
<div class="a" style="left:272px;top:0px;width:1px;height:24px;background:#d3d4da"></div>
<div class="t" style="left:277px;top:4px;font-size:13.5px;color:#262a40">SerialNo</div>
<div class="a" style="left:366px;top:0px;width:1px;height:24px;background:#d3d4da"></div>
<div class="t" style="left:371px;top:4px;font-size:13.5px;color:#262a40">AssetRegNo</div>
<div class="a" style="left:460px;top:0px;width:1px;height:24px;background:#d3d4da"></div>
<div class="t" style="left:465px;top:4px;font-size:13.5px;color:#262a40">LocationDesc</div>
<div class="a" style="left:554px;top:0px;width:1px;height:24px;background:#d3d4da"></div>
<div class="t" style="left:559px;top:4px;font-size:13.5px;color:#262a40">Location</div>
<div class="a" style="left:775px;top:0px;width:1px;height:24px;background:#d3d4da"></div>
<div class="t" style="left:780px;top:4px;font-size:13.5px;color:#262a40">Shipping</div>
</div>
<div class="a" style="left:1068px;top:245px;width:19px;height:26px;background:#f4f5f7"></div>
<div class="a" style="left:1087px;top:245px;width:92px;height:26px;background:#e0fdfd;border-left:1px solid #d3d4da"></div>
<div class="a" style="left:1180px;top:245px;width:159px;height:26px;background:#e0fdfd;border-left:1px solid #d3d4da"></div>
<div class="a" style="left:1340px;top:245px;width:93px;height:26px;background:#e0fdfd;border-left:1px solid #d3d4da"></div>
<div class="a" style="left:1434px;top:245px;width:93px;height:26px;background:#e0fdfd;border-left:1px solid #d3d4da"></div>
<div class="a" style="left:1528px;top:245px;width:93px;height:26px;background:#e0fdfd;border-left:1px solid #d3d4da"></div>
<div class="a" style="left:1622px;top:245px;width:220px;height:26px;background:#fefee0;border-left:1px solid #d3d4da"></div>
<div class="a" style="left:1843px;top:245px;width:52px;height:26px;background:#fefee0;border-left:1px solid #d3d4da"></div>
<svg style="left:1073px;top:254px" width="8" height="10" viewBox="0 0 8 10"><ellipse cx="3.7" cy="2.4" rx="3.5" ry="2.2" fill="#23263a"/><ellipse cx="3.7" cy="2" rx="1.6" ry="0.8" fill="#dde"/><polygon points="1.2,4 6.2,4 4.5,6.5 4.5,9.5 3,9.5 3,6.5" fill="#23263a"/></svg>
<svg style="left:1094px;top:252px" width="20" height="14" viewBox="0 0 20 14"><path d="M0.8 10 V5.2 Q0.8 3.8 2.3 3.8 Q3.8 3.8 3.8 5.2 V10 M0.8 7 H3.8" fill="none" stroke="#6e7282" stroke-width="1.1"/><rect x="5.6" y="0" width="8.6" height="13.7" rx="1.2" fill="#3ea64a"/><rect x="8" y="3.9" width="4" height="6" rx="0.6" fill="#e4f4e4"/><rect x="9" y="4.9" width="1.8" height="1.4" fill="#3ea64a"/><rect x="9" y="7.5" width="1.8" height="1.4" fill="#3ea64a"/><path d="M19 4.3 H17 Q15.8 4.3 15.8 5.5 V8.5 Q15.8 9.8 17 9.8 H19" fill="none" stroke="#6e7282" stroke-width="1.1"/></svg>
<svg style="left:1187px;top:252px" width="20" height="14" viewBox="0 0 20 14"><path d="M0.8 10 V5.2 Q0.8 3.8 2.3 3.8 Q3.8 3.8 3.8 5.2 V10 M0.8 7 H3.8" fill="none" stroke="#6e7282" stroke-width="1.1"/><rect x="5.6" y="0" width="8.6" height="13.7" rx="1.2" fill="#3ea64a"/><rect x="8" y="3.9" width="4" height="6" rx="0.6" fill="#e4f4e4"/><rect x="9" y="4.9" width="1.8" height="1.4" fill="#3ea64a"/><rect x="9" y="7.5" width="1.8" height="1.4" fill="#3ea64a"/><path d="M19 4.3 H17 Q15.8 4.3 15.8 5.5 V8.5 Q15.8 9.8 17 9.8 H19" fill="none" stroke="#6e7282" stroke-width="1.1"/></svg>
<svg style="left:1347px;top:252px" width="20" height="14" viewBox="0 0 20 14"><path d="M0.8 10 V5.2 Q0.8 3.8 2.3 3.8 Q3.8 3.8 3.8 5.2 V10 M0.8 7 H3.8" fill="none" stroke="#6e7282" stroke-width="1.1"/><rect x="5.6" y="0" width="8.6" height="13.7" rx="1.2" fill="#3ea64a"/><rect x="8" y="3.9" width="4" height="6" rx="0.6" fill="#e4f4e4"/><rect x="9" y="4.9" width="1.8" height="1.4" fill="#3ea64a"/><rect x="9" y="7.5" width="1.8" height="1.4" fill="#3ea64a"/><path d="M19 4.3 H17 Q15.8 4.3 15.8 5.5 V8.5 Q15.8 9.8 17 9.8 H19" fill="none" stroke="#6e7282" stroke-width="1.1"/></svg>
<svg style="left:1441px;top:252px" width="20" height="14" viewBox="0 0 20 14"><path d="M0.8 10 V5.2 Q0.8 3.8 2.3 3.8 Q3.8 3.8 3.8 5.2 V10 M0.8 7 H3.8" fill="none" stroke="#6e7282" stroke-width="1.1"/><rect x="5.6" y="0" width="8.6" height="13.7" rx="1.2" fill="#3ea64a"/><rect x="8" y="3.9" width="4" height="6" rx="0.6" fill="#e4f4e4"/><rect x="9" y="4.9" width="1.8" height="1.4" fill="#3ea64a"/><rect x="9" y="7.5" width="1.8" height="1.4" fill="#3ea64a"/><path d="M19 4.3 H17 Q15.8 4.3 15.8 5.5 V8.5 Q15.8 9.8 17 9.8 H19" fill="none" stroke="#6e7282" stroke-width="1.1"/></svg>
<svg style="left:1535px;top:252px" width="20" height="14" viewBox="0 0 20 14"><path d="M0.8 10 V5.2 Q0.8 3.8 2.3 3.8 Q3.8 3.8 3.8 5.2 V10 M0.8 7 H3.8" fill="none" stroke="#6e7282" stroke-width="1.1"/><rect x="5.6" y="0" width="8.6" height="13.7" rx="1.2" fill="#3ea64a"/><rect x="8" y="3.9" width="4" height="6" rx="0.6" fill="#e4f4e4"/><rect x="9" y="4.9" width="1.8" height="1.4" fill="#3ea64a"/><rect x="9" y="7.5" width="1.8" height="1.4" fill="#3ea64a"/><path d="M19 4.3 H17 Q15.8 4.3 15.8 5.5 V8.5 Q15.8 9.8 17 9.8 H19" fill="none" stroke="#6e7282" stroke-width="1.1"/></svg>
<svg style="left:1629px;top:252px" width="20" height="14" viewBox="0 0 20 14"><path d="M0.8 10 V5.2 Q0.8 3.8 2.3 3.8 Q3.8 3.8 3.8 5.2 V10 M0.8 7 H3.8" fill="none" stroke="#6e7282" stroke-width="1.1"/><rect x="5.6" y="0" width="8.6" height="13.7" rx="1.2" fill="#3ea64a"/><rect x="8" y="3.9" width="4" height="6" rx="0.6" fill="#e4f4e4"/><rect x="9" y="4.9" width="1.8" height="1.4" fill="#3ea64a"/><rect x="9" y="7.5" width="1.8" height="1.4" fill="#3ea64a"/><path d="M19 4.3 H17 Q15.8 4.3 15.8 5.5 V8.5 Q15.8 9.8 17 9.8 H19" fill="none" stroke="#6e7282" stroke-width="1.1"/></svg>
<svg style="left:1850px;top:252px" width="20" height="14" viewBox="0 0 20 14"><path d="M0.8 10 V5.2 Q0.8 3.8 2.3 3.8 Q3.8 3.8 3.8 5.2 V10 M0.8 7 H3.8" fill="none" stroke="#6e7282" stroke-width="1.1"/><rect x="5.6" y="0" width="8.6" height="13.7" rx="1.2" fill="#3ea64a"/><rect x="8" y="3.9" width="4" height="6" rx="0.6" fill="#e4f4e4"/><rect x="9" y="4.9" width="1.8" height="1.4" fill="#3ea64a"/><rect x="9" y="7.5" width="1.8" height="1.4" fill="#3ea64a"/><path d="M19 4.3 H17 Q15.8 4.3 15.8 5.5 V8.5 Q15.8 9.8 17 9.8 H19" fill="none" stroke="#6e7282" stroke-width="1.1"/></svg>
<div class="a" style="left:1068px;top:271px;width:827px;height:2px;background:#c8cad0"></div>
<div class="a" style="left:1068px;top:273px;width:827px;height:2px;background:#f7f7f9"></div>
<div class="a" style="left:1068px;top:275px;width:827px;height:1px;background:#dcdde2"></div>
<div class="a" style="left:1068px;top:276px;width:19px;height:26px;background:#f4f5f7;border-bottom:1px solid #dcdde2"></div>
<div class="a" style="left:1087px;top:276px;width:92px;height:26px;background:#ebebec;border-left:1px solid #dcdde2;border-bottom:1px solid #dcdde2"></div>
<div class="a" style="left:1180px;top:276px;width:159px;height:26px;background:#ebebec;border-left:1px solid #dcdde2;border-bottom:1px solid #dcdde2"></div>
<div class="a" style="left:1340px;top:276px;width:93px;height:26px;background:#ebebec;border-left:1px solid #dcdde2;border-bottom:1px solid #dcdde2"></div>
<div class="a" style="left:1434px;top:276px;width:93px;height:26px;background:#ebebec;border-left:1px solid #dcdde2;border-bottom:1px solid #dcdde2"></div>
<div class="a" style="left:1528px;top:276px;width:93px;height:26px;background:#ebebec;border-left:1px solid #dcdde2;border-bottom:1px solid #dcdde2"></div>
<div class="a" style="left:1622px;top:276px;width:220px;height:26px;background:#ffffff;border-left:1px solid #dcdde2;border-bottom:1px solid #dcdde2"></div>
<div class="a" style="left:1843px;top:276px;width:52px;height:26px;background:#fefee0;border-left:1px solid #dcdde2;border-bottom:1px solid #dcdde2"></div>
<svg style="left:1090px;top:282px" width="11" height="12" viewBox="0 0 11 12"><rect x="0.75" y="0.75" width="9.5" height="10" rx="0.5" fill="#fff" stroke="#35384c" stroke-width="1.5"/><path d="M2.5 5.75 H8.5 M5.5 2.5 V9" stroke="#2a2d40" stroke-width="1.1"/></svg>
<div class="t" style="left:1109px;top:282px;font-size:13.5px;color:#262a40">SP2020</div>
<div class="t" style="left:1185px;top:282px;font-size:13.5px;color:#262a40">SP2020 Sprint Colour ...</div>
<div class="t" style="left:1346px;top:282px;font-size:13.5px;color:#262a40">2020-7498</div>
<div class="t" style="left:1439px;top:282px;font-size:13.5px;color:#262a40">AREG000065</div>
<div class="t" style="left:1628px;top:280px;font-size:13.5px;color:#262a40">Room 105</div>
<div class="a" style="left:1843px;top:276px;width:52px;height:26px;overflow:hidden"><div class="t" style="left:5px;top:6px;font-size:13.5px;color:#262a40">Plot 91 Lorem</div></div>
<div class="a" style="left:1068px;top:302px;width:19px;height:26px;background:#f4f5f7;border-bottom:1px solid #dcdde2"></div>
<div class="a" style="left:1087px;top:302px;width:92px;height:26px;background:#ebebec;border-left:1px solid #dcdde2;border-bottom:1px solid #dcdde2"></div>
<div class="a" style="left:1180px;top:302px;width:159px;height:26px;background:#ebebec;border-left:1px solid #dcdde2;border-bottom:1px solid #dcdde2"></div>
<div class="a" style="left:1340px;top:302px;width:93px;height:26px;background:#ebebec;border-left:1px solid #dcdde2;border-bottom:1px solid #dcdde2"></div>
<div class="a" style="left:1434px;top:302px;width:93px;height:26px;background:#ebebec;border-left:1px solid #dcdde2;border-bottom:1px solid #dcdde2"></div>
<div class="a" style="left:1528px;top:302px;width:93px;height:26px;background:#ebebec;border-left:1px solid #dcdde2;border-bottom:1px solid #dcdde2"></div>
<div class="a" style="left:1622px;top:302px;width:220px;height:26px;background:#ffffff;border-left:1px solid #dcdde2;border-bottom:1px solid #dcdde2"></div>
<div class="a" style="left:1843px;top:302px;width:52px;height:26px;background:#fefee0;border-left:1px solid #dcdde2;border-bottom:1px solid #dcdde2"></div>
<svg style="left:1090px;top:308px" width="11" height="12" viewBox="0 0 11 12"><rect x="0.75" y="0.75" width="9.5" height="10" rx="0.5" fill="#fff" stroke="#35384c" stroke-width="1.5"/><path d="M2.5 5.75 H8.5 M5.5 2.5 V9" stroke="#2a2d40" stroke-width="1.1"/></svg>
<div class="t" style="left:1109px;top:308px;font-size:13.5px;color:#262a40">SP2020</div>
<div class="t" style="left:1185px;top:308px;font-size:13.5px;color:#262a40">SP2020 Sprint Colour ...</div>
<div class="t" style="left:1346px;top:308px;font-size:13.5px;color:#262a40">2020-9872</div>
<div class="t" style="left:1439px;top:308px;font-size:13.5px;color:#262a40">AREG000067</div>
<div class="t" style="left:1628px;top:306px;font-size:13.5px;color:#262a40">Room 609</div>
<div class="a" style="left:1843px;top:302px;width:52px;height:26px;overflow:hidden"><div class="t" style="left:5px;top:6px;font-size:13.5px;color:#262a40">Plot 91 Lorem</div></div>
<div class="a" style="left:1068px;top:328px;width:19px;height:27px;background:#f4f5f7;border-bottom:1px solid #dcdde2"></div>
<div class="a" style="left:1087px;top:328px;width:92px;height:27px;background:#ebebec;border-left:1px solid #dcdde2;border-bottom:1px solid #dcdde2"></div>
<div class="a" style="left:1180px;top:328px;width:159px;height:27px;background:#ebebec;border-left:1px solid #dcdde2;border-bottom:1px solid #dcdde2"></div>
<div class="a" style="left:1340px;top:328px;width:93px;height:27px;background:#ebebec;border-left:1px solid #dcdde2;border-bottom:1px solid #dcdde2"></div>
<div class="a" style="left:1434px;top:328px;width:93px;height:27px;background:#ebebec;border-left:1px solid #dcdde2;border-bottom:1px solid #dcdde2"></div>
<div class="a" style="left:1528px;top:328px;width:93px;height:27px;background:#ebebec;border-left:1px solid #dcdde2;border-bottom:1px solid #dcdde2"></div>
<div class="a" style="left:1622px;top:328px;width:220px;height:27px;background:#ffffff;border-left:1px solid #dcdde2;border-bottom:1px solid #dcdde2"></div>
<div class="a" style="left:1843px;top:328px;width:52px;height:27px;background:#fefee0;border-left:1px solid #dcdde2;border-bottom:1px solid #dcdde2"></div>
<svg style="left:1090px;top:334px" width="11" height="12" viewBox="0 0 11 12"><rect x="0.75" y="0.75" width="9.5" height="10" rx="0.5" fill="#fff" stroke="#35384c" stroke-width="1.5"/><path d="M2.5 5.75 H8.5 M5.5 2.5 V9" stroke="#2a2d40" stroke-width="1.1"/></svg>
<div class="t" style="left:1109px;top:334px;font-size:13.5px;color:#262a40">SP2020</div>
<div class="t" style="left:1185px;top:334px;font-size:13.5px;color:#262a40">SP2020 Sprint Colour ...</div>
<div class="t" style="left:1346px;top:334px;font-size:13.5px;color:#262a40">2020-6278</div>
<div class="t" style="left:1439px;top:334px;font-size:13.5px;color:#262a40">AREG000068</div>
<div class="t" style="left:1628px;top:332px;font-size:13.5px;color:#262a40">Room 541</div>
<div class="a" style="left:1843px;top:328px;width:52px;height:27px;overflow:hidden"><div class="t" style="left:5px;top:6px;font-size:13.5px;color:#262a40">Plot 91 Lorem</div></div>
<div class="a" style="left:1068px;top:355px;width:19px;height:26px;background:#f4f5f7;border-bottom:1px solid #dcdde2"></div>
<div class="a" style="left:1087px;top:355px;width:92px;height:26px;background:#ebebec;border-left:1px solid #dcdde2;border-bottom:1px solid #dcdde2"></div>
<div class="a" style="left:1180px;top:355px;width:159px;height:26px;background:#ebebec;border-left:1px solid #dcdde2;border-bottom:1px solid #dcdde2"></div>
<div class="a" style="left:1340px;top:355px;width:93px;height:26px;background:#ebebec;border-left:1px solid #dcdde2;border-bottom:1px solid #dcdde2"></div>
<div class="a" style="left:1434px;top:355px;width:93px;height:26px;background:#ebebec;border-left:1px solid #dcdde2;border-bottom:1px solid #dcdde2"></div>
<div class="a" style="left:1528px;top:355px;width:93px;height:26px;background:#ebebec;border-left:1px solid #dcdde2;border-bottom:1px solid #dcdde2"></div>
<div class="a" style="left:1622px;top:355px;width:220px;height:26px;background:#ffffff;border-left:1px solid #dcdde2;border-bottom:1px solid #dcdde2"></div>
<div class="a" style="left:1843px;top:355px;width:52px;height:26px;background:#fefee0;border-left:1px solid #dcdde2;border-bottom:1px solid #dcdde2"></div>
<svg style="left:1090px;top:361px" width="11" height="12" viewBox="0 0 11 12"><rect x="0.75" y="0.75" width="9.5" height="10" rx="0.5" fill="#fff" stroke="#35384c" stroke-width="1.5"/><path d="M2.5 5.75 H8.5 M5.5 2.5 V9" stroke="#2a2d40" stroke-width="1.1"/></svg>
<div class="t" style="left:1109px;top:361px;font-size:13.5px;color:#262a40">SP2020</div>
<div class="t" style="left:1185px;top:361px;font-size:13.5px;color:#262a40">SP2020 Sprint Colour ...</div>
<div class="t" style="left:1346px;top:361px;font-size:13.5px;color:#262a40">2020-5020</div>
<div class="t" style="left:1439px;top:361px;font-size:13.5px;color:#262a40">AREG000070</div>
<div class="t" style="left:1628px;top:359px;font-size:13.5px;color:#262a40">Room 136</div>
<div class="a" style="left:1843px;top:355px;width:52px;height:26px;overflow:hidden"><div class="t" style="left:5px;top:6px;font-size:13.5px;color:#262a40">Plot 91 Lorem</div></div>
<div class="a" style="left:1068px;top:381px;width:19px;height:26px;background:#f4f5f7;border-bottom:1px solid #dcdde2"></div>
<div class="a" style="left:1087px;top:381px;width:92px;height:26px;background:#ebebec;border-left:1px solid #dcdde2;border-bottom:1px solid #dcdde2"></div>
<div class="a" style="left:1180px;top:381px;width:159px;height:26px;background:#ebebec;border-left:1px solid #dcdde2;border-bottom:1px solid #dcdde2"></div>
<div class="a" style="left:1340px;top:381px;width:93px;height:26px;background:#ebebec;border-left:1px solid #dcdde2;border-bottom:1px solid #dcdde2"></div>
<div class="a" style="left:1434px;top:381px;width:93px;height:26px;background:#ebebec;border-left:1px solid #dcdde2;border-bottom:1px solid #dcdde2"></div>
<div class="a" style="left:1528px;top:381px;width:93px;height:26px;background:#ebebec;border-left:1px solid #dcdde2;border-bottom:1px solid #dcdde2"></div>
<div class="a" style="left:1622px;top:381px;width:220px;height:26px;background:#ffffff;border-left:1px solid #dcdde2;border-bottom:1px solid #dcdde2"></div>
<div class="a" style="left:1843px;top:381px;width:52px;height:26px;background:#fefee0;border-left:1px solid #dcdde2;border-bottom:1px solid #dcdde2"></div>
<svg style="left:1090px;top:387px" width="11" height="12" viewBox="0 0 11 12"><rect x="0.75" y="0.75" width="9.5" height="10" rx="0.5" fill="#fff" stroke="#35384c" stroke-width="1.5"/><path d="M2.5 5.75 H8.5 M5.5 2.5 V9" stroke="#2a2d40" stroke-width="1.1"/></svg>
<div class="t" style="left:1109px;top:387px;font-size:13.5px;color:#262a40">SP2020</div>
<div class="t" style="left:1185px;top:387px;font-size:13.5px;color:#262a40">SP2020 Sprint Colour ...</div>
<div class="t" style="left:1346px;top:387px;font-size:13.5px;color:#262a40">2020-1144</div>
<div class="t" style="left:1439px;top:387px;font-size:13.5px;color:#262a40">AREG000071</div>
<div class="t" style="left:1628px;top:385px;font-size:13.5px;color:#262a40">Room 852</div>
<div class="a" style="left:1843px;top:381px;width:52px;height:26px;overflow:hidden"><div class="t" style="left:5px;top:6px;font-size:13.5px;color:#262a40">Plot 91 Lorem</div></div>
<div class="a" style="left:1068px;top:407px;width:19px;height:27px;background:#f4f5f7;border-bottom:1px solid #dcdde2"></div>
<div class="a" style="left:1087px;top:407px;width:92px;height:27px;background:#ebebec;border-left:1px solid #dcdde2;border-bottom:1px solid #dcdde2"></div>
<div class="a" style="left:1180px;top:407px;width:159px;height:27px;background:#ebebec;border-left:1px solid #dcdde2;border-bottom:1px solid #dcdde2"></div>
<div class="a" style="left:1340px;top:407px;width:93px;height:27px;background:#ebebec;border-left:1px solid #dcdde2;border-bottom:1px solid #dcdde2"></div>
<div class="a" style="left:1434px;top:407px;width:93px;height:27px;background:#ebebec;border-left:1px solid #dcdde2;border-bottom:1px solid #dcdde2"></div>
<div class="a" style="left:1528px;top:407px;width:93px;height:27px;background:#ebebec;border-left:1px solid #dcdde2;border-bottom:1px solid #dcdde2"></div>
<div class="a" style="left:1622px;top:407px;width:220px;height:27px;background:#ffffff;border-left:1px solid #dcdde2;border-bottom:1px solid #dcdde2"></div>
<div class="a" style="left:1843px;top:407px;width:52px;height:27px;background:#fefee0;border-left:1px solid #dcdde2;border-bottom:1px solid #dcdde2"></div>
<svg style="left:1090px;top:413px" width="11" height="12" viewBox="0 0 11 12"><rect x="0.75" y="0.75" width="9.5" height="10" rx="0.5" fill="#fff" stroke="#35384c" stroke-width="1.5"/><path d="M2.5 5.75 H8.5 M5.5 2.5 V9" stroke="#2a2d40" stroke-width="1.1"/></svg>
<div class="t" style="left:1109px;top:413px;font-size:13.5px;color:#262a40">SP2020</div>
<div class="t" style="left:1185px;top:413px;font-size:13.5px;color:#262a40">SP2020 Sprint Colour ...</div>
<div class="t" style="left:1346px;top:413px;font-size:13.5px;color:#262a40">2020-2698</div>
<div class="t" style="left:1439px;top:413px;font-size:13.5px;color:#262a40">AREG000072</div>
<div class="t" style="left:1628px;top:411px;font-size:13.5px;color:#262a40">Room 147</div>
<div class="a" style="left:1843px;top:407px;width:52px;height:27px;overflow:hidden"><div class="t" style="left:5px;top:6px;font-size:13.5px;color:#262a40">Plot 91 Lorem</div></div>
<div class="a" style="left:1068px;top:434px;width:19px;height:26px;background:#f4f5f7;border-bottom:1px solid #dcdde2"></div>
<div class="a" style="left:1087px;top:434px;width:92px;height:26px;background:#ebebec;border-left:1px solid #dcdde2;border-bottom:1px solid #dcdde2"></div>
<div class="a" style="left:1180px;top:434px;width:159px;height:26px;background:#ebebec;border-left:1px solid #dcdde2;border-bottom:1px solid #dcdde2"></div>
<div class="a" style="left:1340px;top:434px;width:93px;height:26px;background:#ebebec;border-left:1px solid #dcdde2;border-bottom:1px solid #dcdde2"></div>
<div class="a" style="left:1434px;top:434px;width:93px;height:26px;background:#ebebec;border-left:1px solid #dcdde2;border-bottom:1px solid #dcdde2"></div>
<div class="a" style="left:1528px;top:434px;width:93px;height:26px;background:#ebebec;border-left:1px solid #dcdde2;border-bottom:1px solid #dcdde2"></div>
<div class="a" style="left:1622px;top:434px;width:220px;height:26px;background:#ffffff;border-left:1px solid #dcdde2;border-bottom:1px solid #dcdde2"></div>
<div class="a" style="left:1843px;top:434px;width:52px;height:26px;background:#fefee0;border-left:1px solid #dcdde2;border-bottom:1px solid #dcdde2"></div>
<svg style="left:1090px;top:440px" width="11" height="12" viewBox="0 0 11 12"><rect x="0.75" y="0.75" width="9.5" height="10" rx="0.5" fill="#fff" stroke="#35384c" stroke-width="1.5"/><path d="M2.5 5.75 H8.5 M5.5 2.5 V9" stroke="#2a2d40" stroke-width="1.1"/></svg>
<div class="t" style="left:1109px;top:440px;font-size:13.5px;color:#262a40">SP2020</div>
<div class="t" style="left:1185px;top:440px;font-size:13.5px;color:#262a40">SP2020 Sprint Colour ...</div>
<div class="t" style="left:1346px;top:440px;font-size:13.5px;color:#262a40">2020-8652</div>
<div class="t" style="left:1439px;top:440px;font-size:13.5px;color:#262a40">AREG000073</div>
<div class="t" style="left:1628px;top:438px;font-size:13.5px;color:#262a40">Room 145</div>
<div class="a" style="left:1843px;top:434px;width:52px;height:26px;overflow:hidden"><div class="t" style="left:5px;top:6px;font-size:13.5px;color:#262a40">Plot 91 Lorem</div></div>
<div class="a" style="left:1068px;top:460px;width:19px;height:26px;background:#f4f5f7;border-bottom:1px solid #dcdde2"></div>
<div class="a" style="left:1087px;top:460px;width:92px;height:26px;background:#ebebec;border-left:1px solid #dcdde2;border-bottom:1px solid #dcdde2"></div>
<div class="a" style="left:1180px;top:460px;width:159px;height:26px;background:#ebebec;border-left:1px solid #dcdde2;border-bottom:1px solid #dcdde2"></div>
<div class="a" style="left:1340px;top:460px;width:93px;height:26px;background:#ebebec;border-left:1px solid #dcdde2;border-bottom:1px solid #dcdde2"></div>
<div class="a" style="left:1434px;top:460px;width:93px;height:26px;background:#ebebec;border-left:1px solid #dcdde2;border-bottom:1px solid #dcdde2"></div>
<div class="a" style="left:1528px;top:460px;width:93px;height:26px;background:#ebebec;border-left:1px solid #dcdde2;border-bottom:1px solid #dcdde2"></div>
<div class="a" style="left:1622px;top:460px;width:220px;height:26px;background:#ffffff;border-left:1px solid #dcdde2;border-bottom:1px solid #dcdde2"></div>
<div class="a" style="left:1843px;top:460px;width:52px;height:26px;background:#fefee0;border-left:1px solid #dcdde2;border-bottom:1px solid #dcdde2"></div>
<svg style="left:1090px;top:466px" width="11" height="12" viewBox="0 0 11 12"><rect x="0.75" y="0.75" width="9.5" height="10" rx="0.5" fill="#fff" stroke="#35384c" stroke-width="1.5"/><path d="M2.5 5.75 H8.5 M5.5 2.5 V9" stroke="#2a2d40" stroke-width="1.1"/></svg>
<div class="t" style="left:1109px;top:466px;font-size:13.5px;color:#262a40">SP2020</div>
<div class="t" style="left:1185px;top:466px;font-size:13.5px;color:#262a40">SP2020 Sprint Colour ...</div>
<div class="t" style="left:1346px;top:466px;font-size:13.5px;color:#262a40">2020-0056</div>
<div class="t" style="left:1439px;top:466px;font-size:13.5px;color:#262a40">AREG000074</div>
<div class="t" style="left:1628px;top:464px;font-size:13.5px;color:#262a40">Room 325</div>
<div class="a" style="left:1843px;top:460px;width:52px;height:26px;overflow:hidden"><div class="t" style="left:5px;top:6px;font-size:13.5px;color:#262a40">Plot 91 Lorem</div></div>
<svg style="left:1075px;top:285px" width="5" height="9" viewBox="0 0 5 9"><polygon points="0,0 5,4.6 0,9.2" fill="#1f2233"/></svg>
<div class="a" style="left:1068px;top:486px;width:19px;height:26px;background:#f4f5f7;border-bottom:1px solid #dcdde2"></div>
<div class="a" style="left:1087px;top:486px;width:92px;height:26px;background:#1fada5;border-left:1px solid #dcdde2;border-bottom:1px solid #dcdde2"></div>
<div class="a" style="left:1180px;top:486px;width:159px;height:26px;background:#1fada5;border-left:1px solid #dcdde2;border-bottom:1px solid #dcdde2"></div>
<div class="a" style="left:1340px;top:486px;width:93px;height:26px;background:#1fada5;border-left:1px solid #dcdde2;border-bottom:1px solid #dcdde2"></div>
<div class="a" style="left:1434px;top:486px;width:93px;height:26px;background:#1fada5;border-left:1px solid #dcdde2;border-bottom:1px solid #dcdde2"></div>
<div class="a" style="left:1528px;top:486px;width:93px;height:26px;background:#1fada5;border-left:1px solid #dcdde2;border-bottom:1px solid #dcdde2"></div>
<div class="a" style="left:1622px;top:486px;width:220px;height:26px;background:#fefee0;border-left:1px solid #dcdde2;border-bottom:1px solid #dcdde2"></div>
<div class="a" style="left:1843px;top:486px;width:52px;height:26px;background:#fefee0;border-left:1px solid #dcdde2;border-bottom:1px solid #dcdde2"></div>
<div class="t" style="left:1072px;top:491px;font-size:12px;color:#555a6a">&#x274B;</div>
<div class="a" style="left:1068px;top:936px;width:827px;height:38px;background:#e6e7ea;border-top:1px solid #c9cbd1"></div>
<div class="a" style="left:1068px;top:974px;width:827px;height:21px;background:#f4f4f6"></div>
<svg style="left:1075px;top:980px" width="6" height="9" viewBox="0 0 6 9"><polygon points="5.5,0 5.5,9 0,4.5" fill="#878b98"/></svg>
<svg style="left:1882px;top:980px" width="7" height="9" viewBox="0 0 7 9"><polygon points="0,0 0,9 6,4.5" fill="#8c909c"/></svg>
<div class="a" style="left:1089px;top:980px;width:368px;height:9px;background:linear-gradient(#eceef1,#d7d9de);border:1px solid #b1b4bc;border-radius:5px"></div>
<div class="a" style="left:1896px;top:175px;width:24px;height:820px;background:#eaebef;border-right:1px solid #cfd0d6"></div>
<div class="a" style="left:1899px;top:185px;width:21px;height:97px;background:#e3e4e8;border:1px solid #b5b8c1;border-right:none;box-shadow:inset 1px 1px 0 #f6f6f8"></div>
<div class="t" style="left:1869px;top:225px;width:80px;text-align:center;font-size:13.5px;color:#2c3046;transform:rotate(90deg)">User Defined</div>
<div class="a" style="left:1919px;top:0px;width:1px;height:996px;background:#c4c6cd"></div>
<div class="a" style="left:0px;top:996px;width:1920px;height:34px;background:linear-gradient(#dfe0e4,#d3d4da 50%,#c9cad1);border-top:1px solid #c3c5cc"></div>
<div class="t" style="left:9px;top:1006px;font-size:13.5px;color:#2a2e44">Open Windows</div>
<svg style="left:104px;top:1011px" width="9" height="5" viewBox="0 0 9 5"><polygon points="0,0 8,0 4,4.5" fill="#2a2c40"/></svg>
<div class="a" style="left:1472px;top:1001px;width:1px;height:24px;background:#b2b5be"></div>
<div class="a" style="left:1574px;top:1001px;width:1px;height:24px;background:#b2b5be"></div>
<div class="a" style="left:1665px;top:1001px;width:1px;height:24px;background:#b2b5be"></div>
<div class="a" style="left:1787px;top:1001px;width:1px;height:24px;background:#b2b5be"></div>
<div class="t" style="left:1484px;top:1006px;font-size:13.5px;color:#2a2e44">User : Bianca</div>
<div class="t" style="left:1585px;top:1006px;font-size:13.5px;color:#2a2e44">27/02/2023</div>
<div class="t" style="left:1675px;top:1006px;font-size:13.5px;color:#2a2e44">Version : 2.5.1.4</div>
<div class="t" style="left:1797px;top:1006px;font-size:13.5px;color:#2a2e44">Example Company</div>
</body></html>
